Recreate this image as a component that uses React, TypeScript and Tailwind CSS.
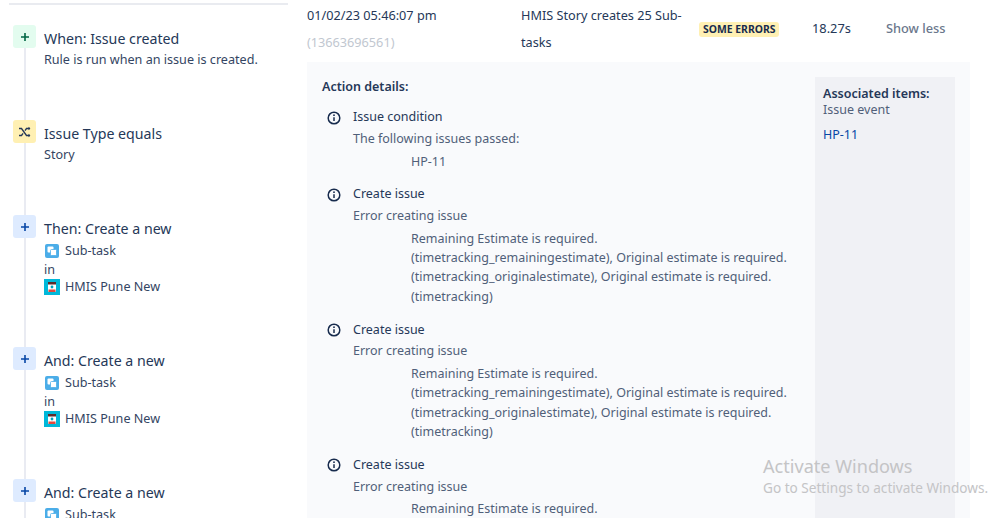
import type { ReactNode } from 'react';

const FONT = "font-['Noto_Sans','Open_Sans',sans-serif]";

function Plus() {
  return (
    <svg width="10" height="10" viewBox="0 0 10 10" fill="none" stroke="currentColor" strokeWidth="1.6">
      <path d="M5 1v8M1 5h8" />
    </svg>
  );
}

function Shuffle() {
  return (
    <svg width="14" height="12" viewBox="0 0 14 12" fill="none" stroke="#253858" strokeWidth="1.3">
      <path d="M1 2.5h2.5l5 7H12M1 9.5h2.5l1.6-2.2M7 4.6l1.5-2.1H12" />
      <path d="M10.5 .8 12.4 2.5 10.5 4.2zM10.5 7.8 12.4 9.5 10.5 11.2z" fill="#253858" stroke="none" />
    </svg>
  );
}

function SubtaskIcon() {
  return (
    <svg width="14" height="14" viewBox="0 0 14 14" className="shrink-0">
      <rect width="14" height="14" rx="2" fill="#4bade8" />
      <rect x="2.5" y="2.5" width="6" height="6" rx="1" fill="#fff" />
      <rect x="5.5" y="5.5" width="6" height="6" rx="1" fill="#fff" stroke="#4bade8" strokeWidth=".8" />
    </svg>
  );
}

function ProjectIcon() {
  return (
    <svg width="16" height="16" viewBox="0 0 16 16" className="shrink-0">
      <rect width="16" height="16" fill="#00b8d9" />
      <rect x="4" y="3" width="8" height="10" rx="1" fill="#fff" />
      <rect x="4" y="3" width="8" height="2.5" fill="#5e2b2b" />
      <rect x="4.5" y="10.5" width="7" height="2.5" fill="#e2483d" />
      <circle cx="8" cy="8" r="1.4" fill="#00a3bf" />
    </svg>
  );
}

function InfoIcon() {
  return (
    <svg width="14" height="14" viewBox="0 0 14 14" fill="none" className="shrink-0">
      <circle cx="7" cy="7" r="5.8" stroke="#172b4d" strokeWidth="1.5" />
      <path d="M7 6.3v3.6" stroke="#172b4d" strokeWidth="1.5" />
      <circle cx="7" cy="4.2" r=".9" fill="#172b4d" />
    </svg>
  );
}

function Step({ icon, tone, title, height, children }: { icon: ReactNode; tone: string; title: string; height: string; children: ReactNode }) {
  return (
    <div className={`flex ${height}`}>
      <div className="flex w-[23px] shrink-0 flex-col items-center">
        <div className={`flex h-[23px] w-[23px] items-center justify-center rounded-[3px] ${tone}`}>{icon}</div>
        <div className="w-[2px] flex-1 bg-[#e9ebf2]" />
      </div>
      <div className="ml-[8px] flex-1 pt-[3px]">
        <div className="text-[14.2px] leading-[22px] text-[#253858]">{title}</div>
        <div className="text-[12.6px] leading-[20px] text-[#344563]">{children}</div>
      </div>
    </div>
  );
}

function CreateTarget() {
  return (
    <>
      <div className="flex h-[22px] items-center gap-[6px] pl-[1px]">
        <SubtaskIcon />
        <span>Sub-task</span>
      </div>
      <div className="h-[15px] leading-[15px]">in</div>
      <div className="flex h-[20px] items-center gap-[5px]">
        <ProjectIcon />
        <span>HMIS Pune New</span>
      </div>
    </>
  );
}

function ActionItem({ title, note, lines }: { title: string; note: string; lines: string[] }) {
  return (
    <div>
      <div className="flex h-[21px] items-center">
        <div className="ml-[5px] w-[26px]">
          <InfoIcon />
        </div>
        <span className="text-[#253858]">{title}</span>
      </div>
      <div className="ml-[31px] h-[21px] leading-[21px] text-[#505f79]">{note}</div>
      <div className="ml-[89px] mt-[2.5px] text-[#505f79]">
        {lines.map((l) => (
          <div key={l} className="h-[19.3px] leading-[19.3px]">{l}</div>
        ))}
      </div>
    </div>
  );
}

const ERROR_LINES = [
  'Remaining Estimate is required.',
  '(timetracking_remainingestimate), Original estimate is required.',
  '(timetracking_originalestimate), Original estimate is required.',
  '(timetracking)',
];

export default function App() {
  return (
    <div className={`relative flex h-[518px] w-[999px] overflow-hidden bg-white ${FONT}`}>
      <div className="ml-[9px] w-[279px] shrink-0">
        <div className="mt-[3px] h-[2px] bg-[#e9ebf0]" />
        <div className="ml-[4px] mt-[20px]">
          <Step icon={<Plus />} tone="bg-[#e3fcef] text-[#006644]" title="When: Issue created" height="h-[95px]">
            Rule is run when an issue is created.
          </Step>
          <Step icon={<Shuffle />} tone="bg-[#fff0b3]" title="Issue Type equals" height="h-[95px]">
            Story
          </Step>
          <Step icon={<Plus />} tone="bg-[#deebff] text-[#0747a6]" title="Then: Create a new" height="h-[132px]">
            <CreateTarget />
          </Step>
          <Step icon={<Plus />} tone="bg-[#deebff] text-[#0747a6]" title="And: Create a new" height="h-[132px]">
            <CreateTarget />
          </Step>
          <Step icon={<Plus />} tone="bg-[#deebff] text-[#0747a6]" title="And: Create a new" height="h-[60px]">
            <div className="flex h-[22px] items-center gap-[6px] pl-[1px]">
              <SubtaskIcon />
              <span>Sub-task</span>
            </div>
          </Step>
        </div>
      </div>

      <div className="ml-[19px] w-[663px] shrink-0 text-[12.5px]">
        <div className="flex h-[62px] items-center text-[#253858]">
          <div className="w-[214px] self-start pt-[2px] text-[12.7px] leading-[27px]">
            <div>01/02/23 05:46:07 pm</div>
            <div className="text-[#c1c7d0]">(13663696561)</div>
          </div>
          <div className="w-[178px] self-start pt-[2px] text-[12.7px] leading-[27px]">HMIS Story creates 25 Sub-tasks</div>
          <div className="-mt-[4px] w-[113px]">
            <span className="inline-block rounded-[3px] bg-[#fff0b3] px-[4px] text-[10.4px] font-bold leading-[15px] text-[#172b4d]">SOME ERRORS</span>
          </div>
          <div className="-mt-[5px] w-[74px] text-[12.8px]">18.27s</div>
          <div className="-mt-[5px] text-[12.8px] font-medium text-[#6b778c]">Show less</div>
        </div>

        <div className="flex h-[456px] justify-between bg-[#f9fafc] px-[15px] pt-[15px]">
          <div className="w-[480px]">
            <div className="mb-[10px] h-[20px] font-semibold leading-[20px] text-[#253858]">Action details:</div>
            <div className="flex flex-col gap-[13.5px]">
              <ActionItem title="Issue condition" note="The following issues passed:" lines={['HP-11']} />
              <ActionItem title="Create issue" note="Error creating issue" lines={ERROR_LINES} />
              <ActionItem title="Create issue" note="Error creating issue" lines={ERROR_LINES} />
              <ActionItem title="Create issue" note="Error creating issue" lines={ERROR_LINES} />
            </div>
          </div>
          <div className="w-[140px] bg-[#f0f1f5] pl-[8px] pt-[9px]">
            <div className="font-semibold leading-[16px] text-[#253858]">Associated items:</div>
            <div className="leading-[16px] text-[#505f79]">Issue event</div>
            <div className="mt-[9px] leading-[16px] text-[#0747a6]">HP-11</div>
          </div>
        </div>
      </div>

      <div className="pointer-events-none absolute left-[763px] top-[454px] text-[#c4c4c6]">
        <div className="text-[18.1px] leading-[24px]">Activate Windows</div>
        <div className="text-[13.6px] leading-[20px]">Go to Settings to activate Windows.</div>
      </div>
    </div>
  );
}
